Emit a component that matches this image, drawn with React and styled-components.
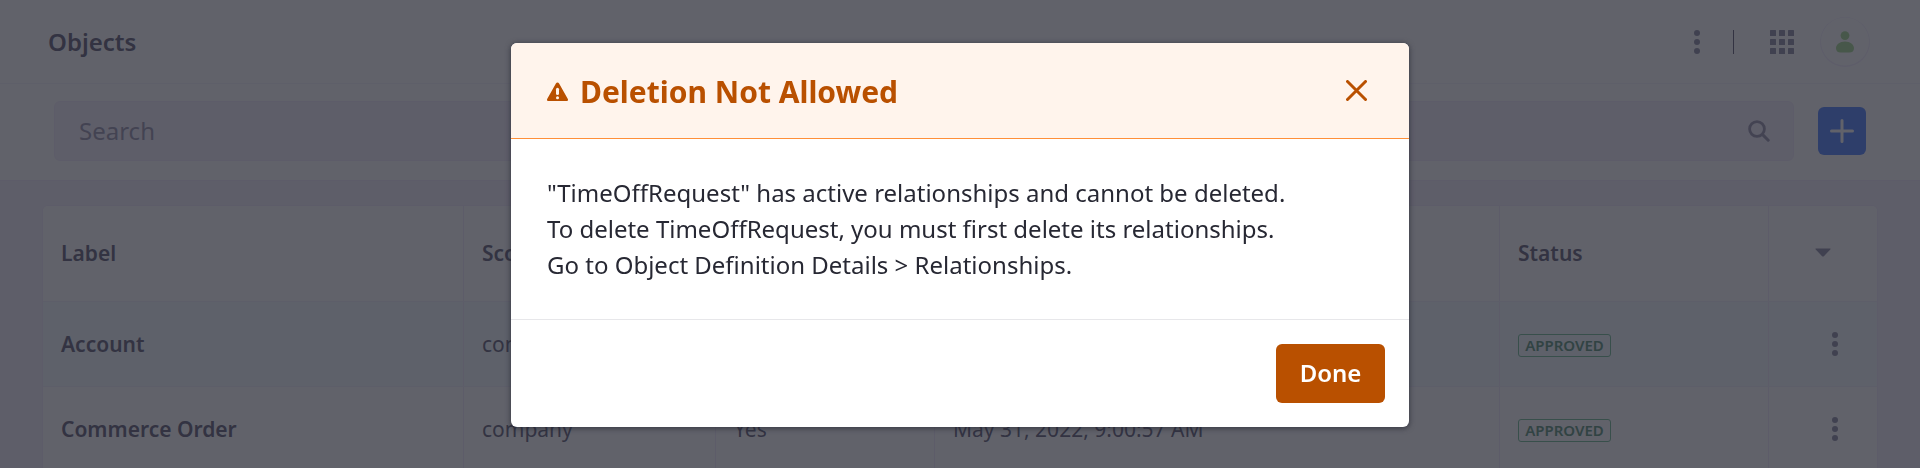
import React from "react";
import styled, { createGlobalStyle } from "styled-components";

const GlobalStyle = createGlobalStyle`
  * { box-sizing: border-box; }
  body {
    margin: 0;
    height: 468px;
    overflow: hidden;
    color: #55536c;
    font-family: "Noto Sans", sans-serif;
    font-size: 21px;
  }
`;

const Page = styled.div`
  height: 468px;
  overflow: hidden;
  background: #f5eefc;
`;

const TopBar = styled.header`
  display: flex;
  align-items: center;
  height: 84px;
  padding: 0 50px 0 48px;
  background: #fff;
  border-bottom: 1px solid #f5f2fc;
  color: #86849e;
`;

const PageTitle = styled.h1`
  flex: 1;
  margin: 0;
  color: #55536c;
  font-size: 24px;
  font-weight: 600;
  line-height: 36px;
`;

const Divider = styled.span`
  width: 1px;
  height: 24px;
  margin: 0 36px 0 33px;
  background: #55536c;
`;

const Avatar = styled.span`
  display: flex;
  align-items: center;
  justify-content: center;
  width: 50px;
  height: 50px;
  margin-left: 26px;
  border-radius: 50%;
  box-shadow: inset 0 -0.5px 0 1px #f2edfc;
  color: #a0d688;
`;

const Toolbar = styled.div`
  display: flex;
  align-items: center;
  gap: 24px;
  height: 97px;
  padding: 0 54px 3px;
  background: #fff;
  border-bottom: 1px solid #f0eafa;
`;

const SearchField = styled.div`
  display: flex;
  flex: 1;
  align-items: center;
  justify-content: space-between;
  height: 60px;
  padding: 0 23px 0 24px;
  border: 1px solid #f0eafa;
  border-radius: 6px;
  background: #f5effc;
  color: #908ea8;
  font-size: 24px;
`;

const AddButton = styled.button`
  display: flex;
  align-items: center;
  justify-content: center;
  width: 48px;
  height: 48px;
  padding: 0;
  border: 0;
  border-radius: 6px;
  background: #457bff;
  color: #fff;
`;

const Table = styled.div`
  margin: 24px 42px 0;
  border: 1px solid #f0eafa;
  border-radius: 6px 6px 0 0;
  background: #fff;
  overflow: hidden;
`;

const Row = styled.div`
  display: grid;
  grid-template-columns: 421px 252px 219px 565px 269px 1fr;
  height: ${(p) => (p.$head ? 96 : 85)}px;
  border-bottom: 1px solid #f0eefc;
  background: ${(p) => (p.$active ? "#f2faff" : "#fff")};
`;

const Cell = styled.div`
  display: flex;
  align-items: center;
  justify-content: ${(p) => (p.$end ? "flex-end" : "flex-start")};
  padding: 0 ${(p) => p.$end || 18}px ${(p) => (p.$raised ? 2 : 0)}px 18px;
  border-right: ${(p) => (p.$end ? 0 : 1)}px solid #f0eafa;
  color: ${(p) => (p.$end ? "#86849e" : "#55536c")};
  font-weight: ${(p) => (p.$strong ? 600 : 400)};
  white-space: nowrap;
`;

const Badge = styled.span`
  display: flex;
  align-items: center;
  justify-content: center;
  width: 93px;
  height: 23px;
  margin-top: 3px;
  border: 1px solid #68b88c;
  border-radius: 3px;
  color: #508c70;
  font-size: 15px;
  font-weight: 600;
  line-height: 21px;
`;

const Backdrop = styled.div`
  position: fixed;
  inset: 0;
  display: flex;
  align-items: flex-start;
  justify-content: center;
  padding-top: 43px;
  background: rgba(39, 40, 51, 0.73);
`;

const Dialog = styled.section`
  width: 898px;
  height: 384px;
  border-radius: 6px;
  background: #fff;
  color: #272833;
  box-shadow: 0 1px 5px 1px rgba(39, 40, 51, 0.6);
  overflow: hidden;
`;

const DialogHeader = styled.header`
  display: flex;
  align-items: center;
  height: 96px;
  padding: 2px 42px 0 36px;
  background: #fff4ec;
  border-bottom: 1px solid #ff8f39;
  color: #b95000;
`;

const DialogTitle = styled.h2`
  flex: 1;
  margin: 0 0 0 12px;
  font-size: 30px;
  font-weight: 700;
  line-height: 36px;
`;

const CloseButton = styled.button`
  display: flex;
  padding: 0 0 2px;
  border: 0;
  background: none;
  color: inherit;
`;

const DialogBody = styled.div`
  height: 180px;
  padding: 36px 36px 0;
  font-size: 24px;
  line-height: 36px;
`;

const Message = styled.p`
  margin: 0;
`;

const DialogFooter = styled.footer`
  display: flex;
  align-items: center;
  justify-content: flex-end;
  height: 108px;
  padding: 0 24px;
  border-top: 1px solid #e7e7ea;
`;

const DoneButton = styled.button`
  width: 109px;
  height: 59px;
  padding: 0 0 2px;
  border: 0;
  border-radius: 6px;
  background: #b95000;
  color: #fff;
  font: 600 24px/36px "Noto Sans", sans-serif;
`;

const Kebab = () => (
  <svg width="6" height="24" viewBox="0 0 6 24" fill="currentColor">
    <circle cx="3" cy="3" r="3" />
    <circle cx="3" cy="12" r="3" />
    <circle cx="3" cy="21" r="3" />
  </svg>
);

const AppsGrid = () => (
  <svg width="24" height="24" viewBox="0 0 24 24" fill="currentColor">
    {[0, 9, 18].map((y) =>
      [0, 9, 18].map((x) => (
        <rect key={`${x}-${y}`} x={x} y={y} width="6" height="6" rx="0.5" />
      ))
    )}
  </svg>
);

const UserIcon = () => (
  <svg width="18" height="22" viewBox="0 0 18 22" fill="currentColor">
    <circle cx="9" cy="4.6" r="4.4" />
    <path d="M9 10.500c5.200 0 9 3.200 9 6.700 0 2.800-1.700 4.300-4.600 4.300H4.600C1.700 21.500 0 20 0 17.200c0-3.500 3.800-6.700 9-6.700z" />
  </svg>
);

const SearchIcon = () => (
  <svg width="22" height="22" viewBox="0 0 22 22" fill="none" stroke="currentColor">
    <circle cx="9" cy="9" r="7.400" strokeWidth="2.800" />
    <path d="M14.600 14.600L20.200 20.200" strokeWidth="3" strokeLinecap="round" />
  </svg>
);

const PlusIcon = () => (
  <svg width="24" height="24" viewBox="0 0 24 24" stroke="currentColor">
    <path d="M12 1.500v21M1.500 12h21" strokeWidth="3" strokeLinecap="round" />
  </svg>
);

const CaretDown = () => (
  <svg width="16" height="9" viewBox="0 0 16 9" fill="currentColor">
    <path d="M1 0.500h14c.6 0 .7.500.3.900L8.900 8.200c-.5.500-1.300.5-1.800 0L.7 1.400C.3 1 .4.500 1 .5z" />
  </svg>
);

const WarningIcon = () => (
  <svg width="21" height="21" viewBox="0 -1.500 21 21">
    <path
      fill="currentColor"
      d="M8.900 1c.7-1.300 2.500-1.300 3.200 0l8.600 15.200c.7 1.200.2 2.300-1.200 2.300h-18C.1 18.500-.4 17.400.3 16.200z"
    />
    <rect x="9" y="5.300" width="3" height="7.200" rx="1.500" fill="#fff4ec" />
    <circle cx="10.500" cy="15.200" r="1.500" fill="#fff4ec" />
  </svg>
);

const CloseIcon = () => (
  <svg width="21" height="21" viewBox="0 0 21 21" stroke="currentColor">
    <path d="M1.500 1.500l18 18M19.500 1.500l-18 18" strokeWidth="3" strokeLinecap="round" />
  </svg>
);

const rows = [
  { label: "Account", scope: "company", system: "", modified: "", active: true },
  {
    label: "Commerce Order",
    scope: "company",
    system: "Yes",
    modified: "May 31, 2022, 9:00:57 AM",
  },
];

export default function App() {
  return (
    <>
      <GlobalStyle />
      <Page>
        <TopBar>
          <PageTitle>Objects</PageTitle>
          <Kebab />
          <Divider />
          <AppsGrid />
          <Avatar>
            <UserIcon />
          </Avatar>
        </TopBar>
        <Toolbar>
          <SearchField>
            <span>Search</span>
            <SearchIcon />
          </SearchField>
          <AddButton aria-label="Add">
            <PlusIcon />
          </AddButton>
        </Toolbar>
        <Table>
          <Row $head>
            <Cell $strong $raised>Label</Cell>
            <Cell $strong $raised>Scope</Cell>
            <Cell />
            <Cell />
            <Cell $strong $raised>Status</Cell>
            <Cell $end={46} $raised>
              <CaretDown />
            </Cell>
          </Row>
          {rows.map((r) => (
            <Row key={r.label} $active={r.active}>
              <Cell $strong>{r.label}</Cell>
              <Cell>{r.scope}</Cell>
              <Cell>{r.system}</Cell>
              <Cell>{r.modified}</Cell>
              <Cell>
                <Badge>APPROVED</Badge>
              </Cell>
              <Cell $end={39}>
                <Kebab />
              </Cell>
            </Row>
          ))}
        </Table>
      </Page>
      <Backdrop>
        <Dialog role="dialog">
          <DialogHeader>
            <WarningIcon />
            <DialogTitle>Deletion Not Allowed</DialogTitle>
            <CloseButton aria-label="Close">
              <CloseIcon />
            </CloseButton>
          </DialogHeader>
          <DialogBody>
            <Message>"TimeOffRequest" has active relationships and cannot be deleted.</Message>
            <Message>To delete TimeOffRequest, you must first delete its relationships.</Message>
            <Message>Go to Object Definition Details &gt; Relationships.</Message>
          </DialogBody>
          <DialogFooter>
            <DoneButton>Done</DoneButton>
          </DialogFooter>
        </Dialog>
      </Backdrop>
    </>
  );
}
